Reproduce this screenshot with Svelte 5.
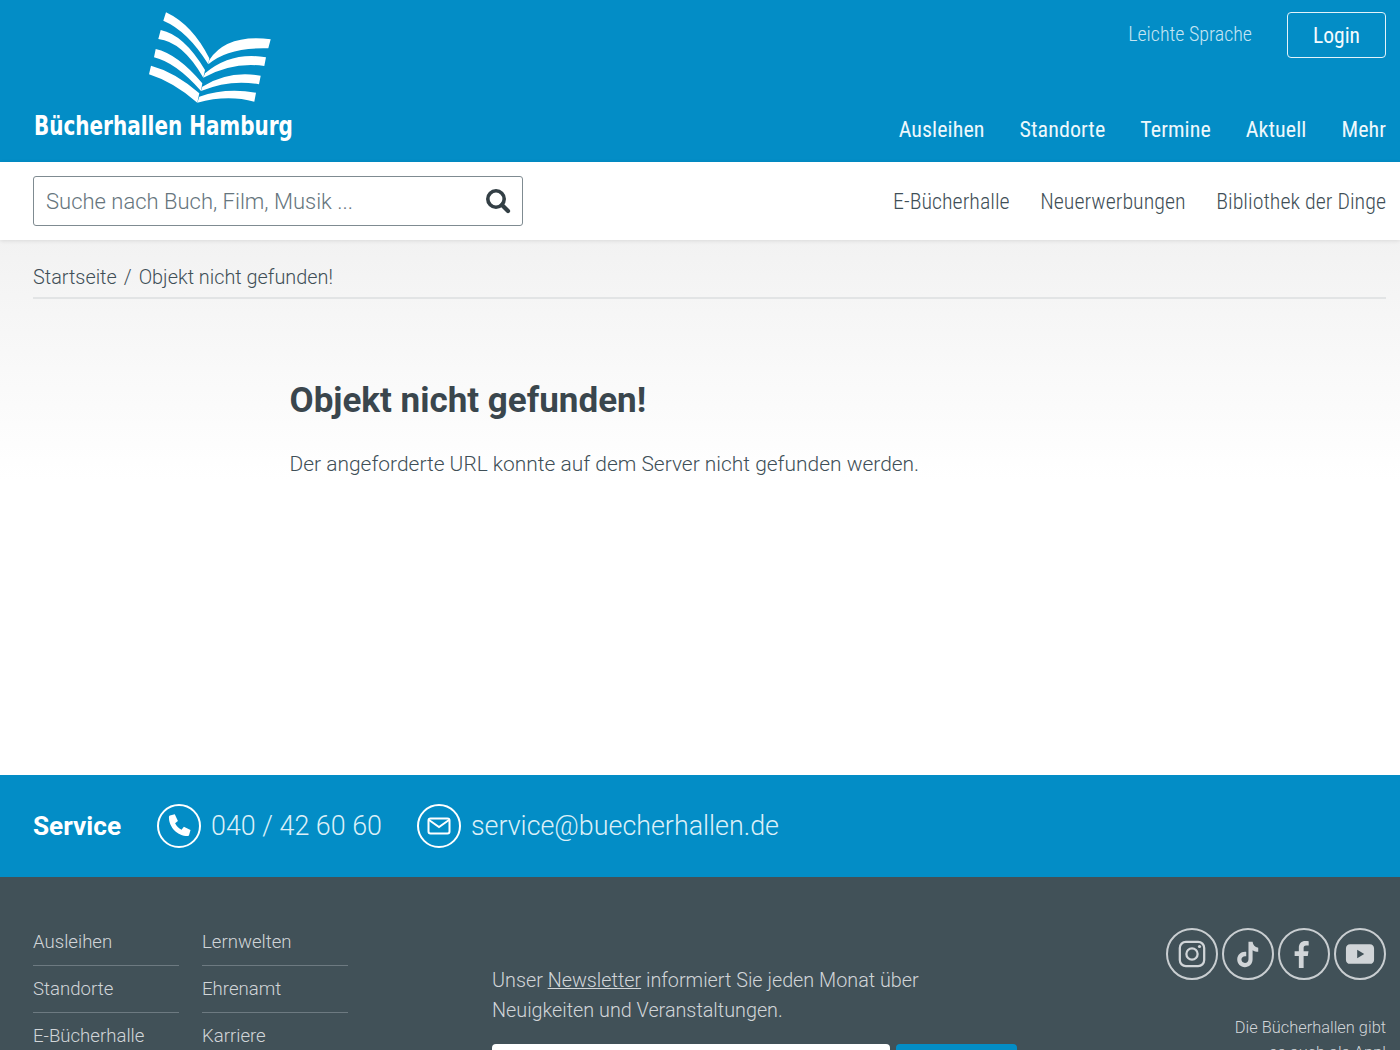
<script>
  const mainNav = ['Ausleihen', 'Standorte', 'Termine', 'Aktuell', 'Mehr'];
  const subNav = ['E-Bücherhalle', 'Neuerwerbungen', 'Bibliothek der Dinge'];
  const footerCols = [
    ['Ausleihen', 'Standorte', 'E-Bücherhalle'],
    ['Lernwelten', 'Ehrenamt', 'Karriere']
  ];
</script>

<div class="page">
  <header class="top">
    <a class="logo" href="#home">
      <svg class="mark" viewBox="149 12 122 92" aria-hidden="true">
        <path d="M166 12.300Q192.400 24.700 209.300 58.300L208.300 64.300Q187.600 30.900 163.300 20.700Z" />
        <path d="M270.700 39.300L268.300 48.300Q227.700 47.100 208.300 64.300L209.300 60Q226.600 33.800 270.700 39.300Z" />
        <path d="M160.700 30Q183.800 34.600 205 70L203.300 77.700Q182.600 41.700 158.300 39Z" />
        <path d="M266 57.300L264.300 66Q232.800 61.600 203.300 77.700L205 73.300Q231.100 51.300 266 57.300Z" />
        <path d="M155.700 49Q177.600 53.900 202.300 83.300L201 91Q175.900 62.500 154 57.300Z" />
        <path d="M260.700 75.700L259 84.300Q230 79 201 91L202.300 86.700Q228.500 70.200 260.700 75.700Z" />
        <path d="M151 65.700Q174.900 72 199.300 93.300L197.300 102.700Q173.500 82 149 74.300Z" />
        <path d="M256 92.700L254.300 101.700Q227.600 94.400 197.300 102.700L199.300 96.700Q225.800 87.300 256 92.700Z" />
      </svg>
      <span class="wordmark">Bücherhallen Hamburg</span>
    </a>
    <div class="top-right">
      <div class="top-actions">
        <a class="easy" href="#easy">Leichte Sprache</a>
        <a class="login" href="#login">Login</a>
      </div>
      <nav class="main-nav">
        {#each mainNav as item}
          <a href="#nav">{item}</a>
        {/each}
      </nav>
    </div>
  </header>

  <div class="subbar">
    <div class="search">
      <span class="placeholder">Suche nach Buch, Film, Musik ...</span>
      <svg class="search-icon" viewBox="0 0 26 26" aria-hidden="true">
        <circle cx="11" cy="11" r="8.200" fill="none" stroke="#333f45" stroke-width="3.600" />
        <path d="M17 17l6 6" stroke="#333f45" stroke-width="4.200" stroke-linecap="round" />
      </svg>
    </div>
    <nav class="sub-nav">
      {#each subNav as item}
        <a href="#sub">{item}</a>
      {/each}
    </nav>
  </div>

  <main class="content">
    <div class="crumbs">
      <a href="#home">Startseite</a><span class="sep">/</span><span>Objekt nicht gefunden!</span>
    </div>
    <article class="article">
      <h1>Objekt nicht gefunden!</h1>
      <p>Der angeforderte URL konnte auf dem Server nicht gefunden werden.</p>
    </article>
  </main>

  <section class="service">
    <strong>Service</strong>
    <a class="contact" href="#tel">
      <span class="ring">
        <svg class="phone" viewBox="0 0 24 24" aria-hidden="true">
          <path d="M3.500 3.200l4.300-1.200 2.800 5.900-2.500 2.100c1.200 2.600 3.100 4.500 5.700 5.700l2.100-2.500 5.900 2.800-1.200 4.300c-.2.700-.7 1.100-1.400 1.100C10.400 21.400 2.600 13.600 2.600 4.600c0-.7.300-1.200.9-1.400z" fill="#fff" />
        </svg>
      </span>
      040 / 42 60 60
    </a>
    <a class="contact" href="#mail">
      <span class="ring">
        <svg viewBox="0 0 24 24" aria-hidden="true">
          <rect x="1.500" y="4.500" width="21" height="15" rx="2" fill="none" stroke="#fff" stroke-width="2" />
          <path d="M2 6l10 7 10-7" fill="none" stroke="#fff" stroke-width="2" />
        </svg>
      </span>
      service@buecherhallen.de
    </a>
  </section>

  <footer class="footer">
    <div class="links">
      {#each footerCols as col}
        <ul>
          {#each col as item}
            <li><a href="#f">{item}</a></li>
          {/each}
        </ul>
      {/each}
    </div>
    <div class="newsletter">
      <p>Unser <a href="#news">Newsletter</a> informiert Sie jeden Monat über Neuigkeiten und Veranstaltungen.</p>
      <div class="signup">
        <span class="field"></span>
        <span class="send"></span>
      </div>
    </div>
    <div class="aside">
      <div class="socials">
        <span class="social">
          <svg viewBox="0 0 32 32" aria-hidden="true">
            <rect x="3" y="3" width="26" height="26" rx="6.500" fill="none" stroke="#d1d5d8" stroke-width="2.400" />
            <circle cx="16" cy="16" r="6" fill="none" stroke="#d1d5d8" stroke-width="2.400" />
            <circle cx="24" cy="8" r="1.700" fill="#d1d5d8" />
          </svg>
        </span>
        <span class="social">
          <svg viewBox="0 0 32 32" aria-hidden="true">
            <path d="M16.500 3h4.400c.4 3.600 2.400 5.800 6 6.200v4.500c-2.200 0-4.200-.6-6-1.800v9.700c0 5.200-3.800 8.400-8.200 8.400-4.600 0-8.200-3.600-8.200-8.100 0-5 4.300-8.800 9.600-8.100v4.700c-2.800-.7-5.100 1-5.100 3.400 0 2 1.700 3.600 3.700 3.600 2.200 0 3.800-1.600 3.800-3.900z" fill="#d1d5d8" />
          </svg>
        </span>
        <span class="social">
          <svg viewBox="0 0 32 32" aria-hidden="true">
            <path d="M10.500 31V18H6v-5h4.500V9.200C10.500 4.600 13.300 2 17.400 2c1.400 0 2.800.1 3.600.3v4.500h-2.600c-2.200 0-2.800 1.200-2.800 2.900V13h5.200l-.8 5h-4.400v13z" fill="#d1d5d8" />
          </svg>
        </span>
        <span class="social">
          <svg viewBox="0 0 32 32" aria-hidden="true">
            <path fill-rule="evenodd" d="M5.500 5.500h21c2.800 0 4.500 2 4.500 4.500v12c0 2.600-1.700 4.500-4.500 4.500h-21C2.700 26.500 1 24.600 1 22V10c0-2.500 1.700-4.500 4.500-4.500zM13 11.500v9l7.500-4.500z" fill="#d1d5d8" />
          </svg>
        </span>
      </div>
      <p class="app">Die Bücherhallen gibt<br />es auch als App!</p>
    </div>
  </footer>
</div>

<style>
  :global(body) {
    margin: 0;
    background: #fff;
  }
  .page {
    height: 1050px;
    overflow: hidden;
    font-family: Roboto, "Liberation Sans", sans-serif;
    color: #3f4f57;
  }
  a {
    color: inherit;
    text-decoration: none;
  }
  .top {
    height: 162px;
    box-sizing: border-box;
    background: #038dc6;
    display: flex;
    justify-content: space-between;
    padding: 12px 14px 0 33px;
  }
  .logo {
    display: flex;
    flex-direction: column;
    width: 262px;
    color: #fff;
  }
  .mark {
    width: 122px;
    height: 92px;
    margin-left: 116px;
    fill: #fff;
  }
  .wordmark {
    display: block;
    margin: 6px 0 0 0.500px;
    font-family: "DejaVu Sans Condensed", "DejaVu Sans", sans-serif;
    font-weight: 700;
    font-size: 27px;
    line-height: 32px;
    white-space: nowrap;
    transform: scaleX(0.823);
    transform-origin: left center;
  }
  .top-right {
    display: flex;
    flex-direction: column;
    align-items: flex-end;
  }
  .top-actions {
    display: flex;
    align-items: center;
    gap: 35px;
  }
  .easy {
    padding-bottom: 2px;
    font-size: 20px;
    font-weight: 300;
    font-stretch: 75%;
    color: #c5e5f3;
  }
  .login {
    box-sizing: border-box;
    width: 99px;
    height: 46px;
    border: 1.500px solid #e3f3fa;
    border-radius: 4px;
    display: flex;
    align-items: center;
    justify-content: center;
    font-size: 21.500px;
    font-stretch: 75%;
    color: #f4fbfe;
  }
  .main-nav {
    display: flex;
    gap: 35px;
    margin-top: 58px;
    font-size: 22px;
    letter-spacing: 0.07px;
    line-height: 28px;
    font-stretch: 75%;
    color: #eef8fc;
  }
  .subbar {
    position: relative;
    height: 78px;
    box-sizing: border-box;
    background: #fff;
    box-shadow: 0 1px 4px rgba(0, 0, 0, 0.1);
    display: flex;
    justify-content: space-between;
    align-items: flex-start;
    padding: 14px 14px 0 33px;
  }
  .search {
    box-sizing: border-box;
    width: 490px;
    height: 50px;
    border: 1px solid #7f8b91;
    border-radius: 3px;
    display: flex;
    align-items: center;
    justify-content: space-between;
    padding: 0 11px 0 12px;
  }
  .placeholder {
    font-size: 22px;
    font-weight: 300;
    color: #66757d;
  }
  .search-icon {
    width: 26px;
    height: 26px;
  }
  .sub-nav {
    display: flex;
    gap: 30.500px;
    height: 50px;
    align-items: center;
    font-size: 22px;
    font-weight: 300;
    font-stretch: 75%;
    color: #3f4f57;
  }
  .content {
    height: 535px;
    box-sizing: border-box;
    padding: 0 14px 0 33px;
    background: linear-gradient(#f2f2f2, #ffffff 240px);
  }
  .crumbs {
    height: 59px;
    box-sizing: border-box;
    padding-top: 25px;
    border-bottom: 2px solid #e2e4e5;
    font-size: 19.850px;
    font-weight: 300;
    line-height: 26px;
  }
  .sep {
    margin: 0 7px;
  }
  .article {
    margin-left: 256.500px;
  }
  h1 {
    margin: 80px 0 0;
    font-size: 35px;
    line-height: 44px;
    font-weight: 700;
    color: #3a464d;
  }
  .article p {
    margin: 25px 0 0;
    font-size: 20.950px;
    font-weight: 300;
    line-height: 32px;
  }
  .service {
    height: 102px;
    box-sizing: border-box;
    background: #038dc6;
    display: flex;
    align-items: center;
    padding: 0 0 1px 33px;
    color: #fff;
  }
  .service strong {
    font-size: 26.200px;
    font-weight: 700;
    margin-right: 36px;
  }
  .contact {
    display: flex;
    align-items: center;
    gap: 10px;
    margin-right: 35px;
    font-size: 26.850px;
    font-weight: 300;
    color: #dcf0f8;
  }
  .ring {
    box-sizing: border-box;
    width: 44px;
    height: 44px;
    border: 2px solid #fff;
    border-radius: 50%;
    display: flex;
    align-items: center;
    justify-content: center;
  }
  .ring svg {
    width: 24px;
    height: 24px;
  }
  .ring .phone {
    width: 27px;
    height: 27px;
  }
  .footer {
    height: 300px;
    box-sizing: border-box;
    background: #415158;
    color: #d1d5d8;
    display: flex;
    padding: 42px 14px 0 33px;
  }
  .links {
    display: flex;
    gap: 23px;
    width: 459px;
  }
  ul {
    list-style: none;
    margin: 0;
    padding: 0;
    width: 146px;
  }
  li {
    height: 47px;
    box-sizing: border-box;
    padding-top: 9.500px;
    border-bottom: 1px solid #6d7a81;
    font-size: 18.600px;
    font-weight: 300;
    line-height: 26px;
  }
  .newsletter {
    width: 525px;
    padding-top: 47px;
  }
  .newsletter p {
    margin: 0;
    width: 470px;
    font-size: 19.800px;
    font-weight: 300;
    line-height: 30px;
  }
  .newsletter p a {
    text-decoration: underline;
  }
  .signup {
    display: flex;
    gap: 6px;
    margin-top: 18px;
  }
  .field {
    width: 398px;
    height: 50px;
    border-radius: 4px;
    background: #fff;
  }
  .send {
    width: 121px;
    height: 50px;
    border-radius: 4px;
    background: #038dc6;
  }
  .aside {
    flex: 1;
    display: flex;
    flex-direction: column;
    align-items: flex-end;
    margin-top: 9px;
  }
  .socials {
    display: flex;
    gap: 4px;
  }
  .social {
    box-sizing: border-box;
    width: 52px;
    height: 52px;
    border: 2px solid #c9ced1;
    border-radius: 50%;
    display: flex;
    align-items: center;
    justify-content: center;
  }
  .social svg {
    width: 30px;
    height: 30px;
  }
  .app {
    margin: 35px 0 0;
    text-align: right;
    font-size: 16.400px;
    font-weight: 300;
    line-height: 25px;
  }
</style>
